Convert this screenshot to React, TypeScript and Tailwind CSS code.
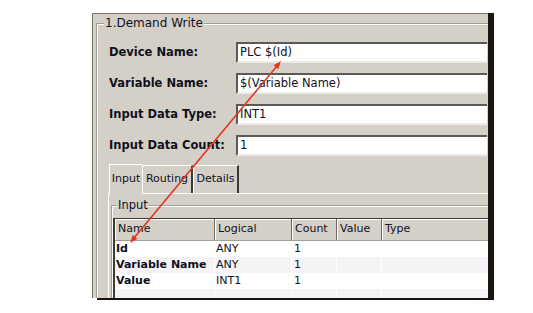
const font = { fontFamily: '"DejaVu Sans", Verdana, sans-serif' };

const fields = [
  { label: "Device Name:", value: "PLC $(Id)" },
  { label: "Variable Name:", value: "$(Variable Name)" },
  { label: "Input Data Type:", value: "INT1" },
  { label: "Input Data Count:", value: "1" },
];

const rows = [
  { name: "Id", logical: "ANY", count: "1" },
  { name: "Variable Name", logical: "ANY", count: "1" },
  { name: "Value", logical: "INT1", count: "1" },
  { name: "", logical: "", count: "" },
];

const cols = "grid grid-cols-[100px_77px_45px_45px_1fr]";

function TextBox({ value }: { value: string }) {
  return (
    <div className="flex-1 h-[21px] bg-white border-t-2 border-l-2 border-b-2 border-t-[#5c5a56] border-l-[#5c5a56] border-b-[#ecebe8] flex items-center pl-[2px] text-[11.5px] text-[#10101c]">
      {value}
    </div>
  );
}

function Tab({ label, w, active }: { label: string; w: string; active?: boolean }) {
  return (
    <div
      className={
        active
          ? `${w} h-[30px] relative z-10 -mb-px bg-[#d4d0c8] border-t border-l border-white flex items-center justify-center text-[11px] text-[#10101c]`
          : `${w} h-[28px] bg-[#d4d0c8] border-t border-l border-white border-r-2 border-r-[#3c3a36] flex items-center justify-center text-[11px] text-[#10101c]`
      }
    >
      {label}
    </div>
  );
}

export default function App() {
  return (
    <div className="relative w-[533px] h-[313px] bg-white overflow-hidden" style={font}>
      {/* black drop shadow behind the dialog */}
      <div className="ml-[97px] mt-[16px] w-[397px] h-[287px] bg-[#1a1410]">
        <div className="-ml-[5px] -mt-[3px] w-[396px] h-[285px] bg-[#d4d0c8] border-t border-l border-[#7c7870] overflow-hidden pl-[3px] pt-[9px]">
          <div className="relative w-[420px] h-[300px] border border-[#a39f97] shadow-[inset_1px_1px_0_#ffffff] pl-[12px] pt-[18px]">
            <div className="absolute left-[7px] top-[-9px] px-[1px] bg-[#d4d0c8] text-[12px] leading-[16px] text-[#10101c]">
              1.Demand Write
            </div>

            <div className="flex flex-col gap-[10px] w-[378px]">
              {fields.map((f) => (
                <div key={f.label} className="flex items-center h-[21px]">
                  <div className="w-[127px] font-bold text-[11.5px] text-[#10101c]">{f.label}</div>
                  <TextBox value={f.value} />
                </div>
              ))}
            </div>

            <div className="ml-[-1px] mt-[7px]">
              <div className="flex items-end h-[30px] pl-[1px]">
                <Tab label="Input" w="w-[33px]" active />
                <Tab label="Routing" w="w-[51px]" />
                <Tab label="Details" w="w-[46px]" />
              </div>

              <div className="h-[120px] border-t border-l border-white pl-[2px] pt-[11px]">
                <div className="relative h-[110px] border border-[#a39f97] shadow-[inset_1px_1px_0_#ffffff] pl-[1px] pt-[12px]">
                  <div className="absolute left-[5px] top-[-9px] px-[1px] bg-[#d4d0c8] text-[11.5px] leading-[16px] text-[#10101c]">
                    Input
                  </div>

                  <div className="border-t border-l-2 border-[#3c3a36] bg-white">
                    <div className={`${cols} h-[22px] bg-[#d4d0c8] border-b border-[#a39f97] text-[11px] text-[#10101c]`}>
                      {["Name", "Logical", "Count", "Value", "Type"].map((h) => (
                        <div key={h} className="border-r border-r-[#6c6a66] shadow-[inset_1px_1px_0_#ffffff] pl-[3px] flex items-center">
                          {h}
                        </div>
                      ))}
                    </div>
                    {rows.map((r, i) => (
                      <div
                        key={i}
                        className={`${cols} h-[16px] text-[11px] text-[#10101c] ${i % 2 === 1 ? "bg-[#f6f3f6]" : "bg-white"}`}
                      >
                        <div className="pl-[1px] font-bold leading-[16px] border-r border-white">{r.name}</div>
                        <div className="pl-[1px] leading-[16px] border-r border-white">{r.logical}</div>
                        <div className="pl-[2px] leading-[16px] border-r border-white">{r.count}</div>
                        <div className="border-r border-white" />
                        <div />
                      </div>
                    ))}
                  </div>
                </div>
              </div>
            </div>
          </div>
        </div>
      </div>

      <svg className="absolute inset-0 pointer-events-none" width="533" height="313" viewBox="0 0 533 313">
        <line x1="277" y1="66" x2="134" y2="238" stroke="#e2341f" strokeWidth="1.6" />
        <polygon points="281,61 278.2,69.1 273.6,65.3" fill="#e2341f" />
        <polygon points="130,243 137.4,238.7 132.8,234.9" fill="#e2341f" />
      </svg>
    </div>
  );
}
